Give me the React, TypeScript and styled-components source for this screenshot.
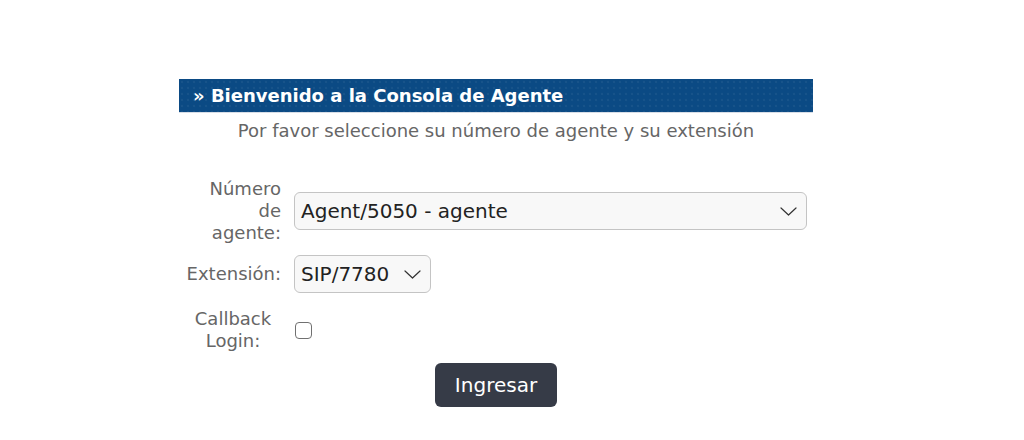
import React from "react";
import styled, { createGlobalStyle } from "styled-components";

const Global = createGlobalStyle`
  html, body { margin: 0; padding: 0; background: #ffffff; }
  body { font-family: "DejaVu Sans", Verdana, sans-serif; }
`;

const Page = styled.div`
  width: 1024px;
  height: 440px;
  padding-top: 79px;
  box-sizing: border-box;
`;

const Panel = styled.div`
  width: 634px;
  margin-left: 179px;
  display: flex;
  flex-direction: column;
  align-items: center;
`;

const Header = styled.div`
  align-self: stretch;
  height: 34px;
  box-sizing: border-box;
  padding-left: 14px;
  display: flex;
  align-items: center;
  background-color: #0b4a84;
  background-image: radial-gradient(circle, rgba(255,255,255,0.05) 1.2px, transparent 1.6px);
  background-size: 6px 6px;
  border-bottom: 1px solid #d7dde6;
  color: #ffffff;
  font-weight: bold;
  font-size: 18px;
`;

const Subtitle = styled.div`
  margin-top: 7px;
  font-size: 18px;
  line-height: 22px;
  color: #666666;
`;

const Form = styled.div`
  margin-top: 36px;
  display: grid;
  grid-template-columns: 96px 513px;
  column-gap: 13px;
  align-items: center;
`;

const Label = styled.div<{ $center?: boolean; $mt?: number }>`
  font-size: 18px;
  line-height: 22px;
  color: #666666;
  text-align: ${(p) => (p.$center ? "center" : "right")};
  justify-self: ${(p) => (p.$center ? "end" : "stretch")};
  padding-right: ${(p) => (p.$center ? "5px" : "0")};
  width: ${(p) => (p.$center ? "86px" : "auto")};
  margin-top: ${(p) => p.$mt ?? 0}px;
`;

const Cell = styled.div<{ $mt?: number }>`
  margin-top: ${(p) => p.$mt ?? 0}px;
  display: flex;
  align-items: center;
`;

const SelectBox = styled.div<{ $w?: number }>`
  width: ${(p) => (p.$w ? `${p.$w}px` : "100%")};
  height: 38px;
  box-sizing: border-box;
  border: 1px solid #c4c4c4;
  border-radius: 6px;
  background: #f8f8f8;
  display: flex;
  align-items: center;
  justify-content: space-between;
  padding: 0 9px 0 6px;
  font-size: 20px;
  color: #222222;
`;

const Chevron = () => (
  <svg width="17" height="9" viewBox="0 0 17 9" fill="none">
    <path d="M1 1 L8.5 8 L16 1" stroke="#333" strokeWidth="1.2" strokeLinecap="round" strokeLinejoin="round" />
  </svg>
);

const CheckBox = styled.span`
  display: inline-block;
  width: 17px;
  height: 17px;
  box-sizing: border-box;
  border: 1.5px solid #707070;
  border-radius: 4px;
  background: #ffffff;
  margin-left: 1px;
`;

const Button = styled.button`
  margin-top: 11px;
  width: 122px;
  height: 44px;
  border: none;
  border-radius: 6px;
  background: #363b47;
  color: #ffffff;
  font-family: "DejaVu Sans", Verdana, sans-serif;
  font-size: 20px;
  cursor: pointer;
`;

export default function App() {
  return (
    <Page>
      <Global />
      <Panel>
        <Header>» Bienvenido a la Consola de Agente</Header>
        <Subtitle>Por favor seleccione su número de agente y su extensión</Subtitle>
        <Form>
          <Label>Número de agente:</Label>
          <Cell>
            <SelectBox>
              <span>Agent/5050 - agente</span>
              <Chevron />
            </SelectBox>
          </Cell>
          <Label $mt={11}>Extensión:</Label>
          <Cell $mt={11}>
            <SelectBox $w={137}>
              <span>SIP/7780</span>
              <Chevron />
            </SelectBox>
          </Cell>
          <Label $center $mt={15}>Callback Login:</Label>
          <Cell $mt={15}>
            <CheckBox />
          </Cell>
        </Form>
        <Button>Ingresar</Button>
      </Panel>
    </Page>
  );
}
